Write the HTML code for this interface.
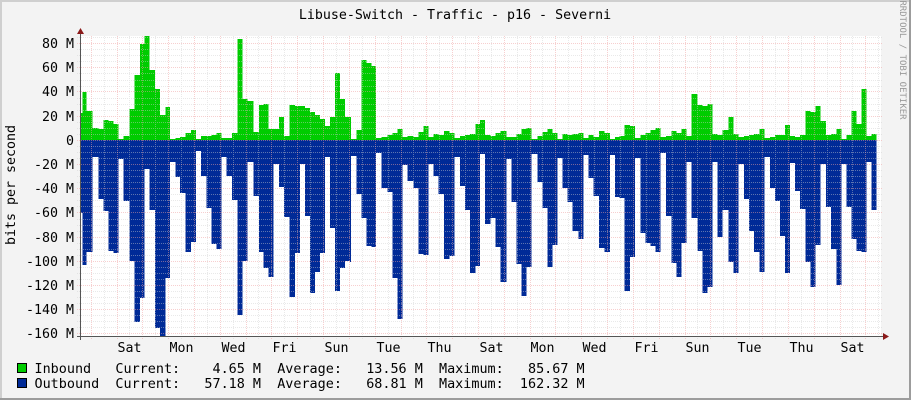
<!DOCTYPE html>
<html><head><meta charset="utf-8"><style>
html,body{margin:0;padding:0;background:#f3f3f3;}
svg{display:block;}
text{font-family:"DejaVu Sans Mono","Liberation Mono",monospace;fill:#000;}
</style></head><body>
<svg width="911" height="400" viewBox="0 0 911 400" xmlns="http://www.w3.org/2000/svg">
<rect x="0" y="0" width="911" height="400" fill="#f3f3f3"/>
<rect x="0" y="0" width="911" height="2" fill="#cfcfcf"/>
<rect x="0" y="0" width="2" height="400" fill="#cfcfcf"/>
<rect x="909" y="0" width="2" height="400" fill="#9c9c9c"/>
<rect x="0" y="398" width="911" height="2" fill="#9c9c9c"/>
<rect x="80" y="36" width="801" height="301" fill="#ffffff"/>

<g shape-rendering="crispEdges">
<path fill="#00cc00" d="M80 140V113H82.7V92H86.7V111H92.7V128H98.3V129H103.3V120H108.3V121H113.3V124H118.3V139H123.3V136H129.3V109H134.3V75H140V44H144.3V36H149.3V70H155V89H160V115H165.7V107H170V139H175.7V138H180V137H185.3V133H191V130H196V139H201V136H206.7V136H211.7V135H216.7V133H221.7V138H226.7V138H232V133H237.3V39H242.3V99H247.7V101H253.3V132H259V105H263.3V104H268.3V129H273.3V129H279V117H284V136H289.3V105H295V106H300V106H305V108H310V112H315V115H320V119H325V126H330V117H335V73H340V99H345V117H350V117H351V139H356.7V130H361.7V60H366.7V63H371.7V66H376V138H381.7V137H387.7V135H392.7V133H397.7V129H402.3V137H407.7V136H413.3V137H418.3V132H423.3V126H428.3V137H433.3V134H438.3V135H444V131H449.3V133H454.3V138H460V136H465V135H470V134H475.7V124H480V120H485V135H490.7V136H495.7V133H500.7V131H506.7V137H511.7V137H516.7V134H521.7V129H526.7V128H531.7V139H537.3V136H542.3V132H547.3V129H552.3V133H557.3V139H562.3V134H567.7V135H572.7V134H578.3V133H583.3V138H588.3V135H593.3V137H599V131H604.3V133H610V139H615V137H619.3V136H624.3V125H630V126H635V138H640.7V135H645.7V133H650.7V130H655.7V128H660.7V137H666V136H671.7V131H676.7V133H681.7V129H686.7V136H691.7V94H697.3V105H702.3V106H707.3V104H712.3V134H717.3V135H722.7V130H728.3V117H733.3V134H738.3V137H744V136H749V135H754V134H759.3V129H764.3V138H770V137H775V135H780V135H785V125H790V136H795V137H800V135H805.7V111H810.7V112H815.7V106H820.7V121H826V135H831V134H836.7V129H841.7V139H846.7V135H851.7V111H856.7V124H861.7V89H866.7V136H871.7V134H876.7V140Z"/>
<path fill="#002a97" d="M80 140V213H82.7V265H86.7V252H92.7V157H98.3V199H103.3V211H108.3V251H113.3V253H118.3V159H123.3V201H129.3V261H134.3V322H140V298H144.3V169H149.3V210H155V328H160V336H165.7V278H170V162H175.7V177H180V193H185.3V252H191V242H196V151H201V176H206.7V208H211.7V244H216.7V249H221.7V157H226.7V176H232V200H237.3V315H242.3V261H247.7V162H253.3V196H259V252H263.3V268H268.3V277H273.3V164H279V187H284V217H289.3V297H295V253H300V164H305V216H310V293H315V272H320V253H325V157H330V228H335V291H340V268H345V261H350V262H351V156H356.7V194H361.7V218H366.7V246H371.7V247H376V153H381.7V188H387.7V192H392.7V278H397.7V319H402.3V165H407.7V181H413.3V188H418.3V254H423.3V255H428.3V164H433.3V176H438.3V194H444V259H449.3V256H454.3V157H460V186H465V210H470V273H475.7V266H480V154H485V224H490.7V218H495.7V247H500.7V282H506.7V159H511.7V202H516.7V264H521.7V296H526.7V267H531.7V154H537.3V182H542.3V208H547.3V267H552.3V245H557.3V158H562.3V188H567.7V202H572.7V231H578.3V239H583.3V155H588.3V178H593.3V196H599V248H604.3V252H610V155H615V197H619.3V198H624.3V291H630V257H635V158H640.7V233H645.7V243H650.7V246H655.7V252H660.7V153H666V216H671.7V263H676.7V277H681.7V243H686.7V162H691.7V218H697.3V251H702.3V293H707.3V287H712.3V162H717.3V237H722.7V210H728.3V262H733.3V273H738.3V164H744V199H749V231H754V252H759.3V272H764.3V157H770V188H775V201H780V236H785V273H790V163H795V191H800V209H805.7V262H810.7V287H815.7V245H820.7V164H826V207H831V249H836.7V285H841.7V164H846.7V207H851.7V239H856.7V251H861.7V252H866.7V162H871.7V210H876.7V140Z"/>

<path stroke="#cfcfcf" stroke-width="1" stroke-dasharray="1,1" fill="none" opacity="0.45" d="M77 37.5H882M77 49.5H882M77 55.5H882M77 61.5H882M77 73.5H882M77 80.5H882M77 86.5H882M77 98.5H882M77 104.5H882M77 110.5H882M77 122.5H882M77 128.5H882M77 134.5H882M77 146.5H882M77 152.5H882M77 158.5H882M77 170.5H882M77 176.5H882M77 182.5H882M77 194.5H882M77 200.5H882M77 206.5H882M77 219.5H882M77 225.5H882M77 231.5H882M77 243.5H882M77 249.5H882M77 255.5H882M77 267.5H882M77 273.5H882M77 279.5H882M77 291.5H882M77 297.5H882M77 303.5H882M77 315.5H882M77 321.5H882M77 327.5H882
M104.5 36V340M129.5 36V340M155.5 36V340M181.5 36V340M207.5 36V340M233.5 36V340M258.5 36V340M284.5 36V340M310.5 36V340M336.5 36V340M362.5 36V340M388.5 36V340M413.5 36V340M439.5 36V340M465.5 36V340M491.5 36V340M517.5 36V340M542.5 36V340M568.5 36V340M594.5 36V340M620.5 36V340M646.5 36V340M672.5 36V340M697.5 36V340M723.5 36V340M749.5 36V340M775.5 36V340M801.5 36V340M827.5 36V340M852.5 36V340M878.5 36V340"/>
<path stroke="#f0a0a0" stroke-width="1" stroke-dasharray="1,1" fill="none" opacity="0.5" d="M77 43.5H882M77 67.5H882M77 91.5H882M77 116.5H882M77 140.5H882M77 164.5H882M77 188.5H882M77 212.5H882M77 237.5H882M77 261.5H882M77 285.5H882M77 309.5H882M77 333.5H882
M91.5 36V340M117.5 36V340M142.5 36V340M168.5 36V340M194.5 36V340M220.5 36V340M246.5 36V340M271.5 36V340M297.5 36V340M323.5 36V340M349.5 36V340M375.5 36V340M401.5 36V340M426.5 36V340M452.5 36V340M478.5 36V340M504.5 36V340M530.5 36V340M555.5 36V340M581.5 36V340M607.5 36V340M633.5 36V340M659.5 36V340M685.5 36V340M710.5 36V340M736.5 36V340M762.5 36V340M788.5 36V340M814.5 36V340M840.5 36V340M865.5 36V340"/>

<path stroke="#555" stroke-width="1" fill="none" d="M80.5 33V340M77 336.5H884"/>
</g>
<polygon points="80.5,28 77,34 84,34" fill="#8b1a1a"/>
<polygon points="889,336.5 883,333 883,340" fill="#8b1a1a"/>

<text x="455" y="19" font-size="13.3" text-anchor="middle">Libuse-Switch - Traffic - p16 - Severni</text>

<g font-size="13.3" text-anchor="end">
<text x="74" y="48">80 M</text>
<text x="74" y="72">60 M</text>
<text x="74" y="96">40 M</text>
<text x="74" y="121">20 M</text>
<text x="74" y="145">0</text>
<text x="74" y="169">-20 M</text>
<text x="74" y="193">-40 M</text>
<text x="74" y="217">-60 M</text>
<text x="74" y="242">-80 M</text>
<text x="74" y="266">-100 M</text>
<text x="74" y="290">-120 M</text>
<text x="74" y="314">-140 M</text>
<text x="74" y="338">-160 M</text>
</g>

<text transform="translate(15,185) rotate(-90)" font-size="13.3" text-anchor="middle">bits per second</text>
<text transform="translate(900,60) rotate(90)" font-size="9" text-anchor="middle" style="fill:#999">RRDTOOL / TOBI OETIKER</text>

<g font-size="13.3" text-anchor="middle">
<text x="129.5" y="352">Sat</text>
<text x="181.5" y="352">Mon</text>
<text x="233.5" y="352">Wed</text>
<text x="284.5" y="352">Fri</text>
<text x="336.5" y="352">Sun</text>
<text x="388.5" y="352">Tue</text>
<text x="439.5" y="352">Thu</text>
<text x="491.5" y="352">Sat</text>
<text x="542.5" y="352">Mon</text>
<text x="594.5" y="352">Wed</text>
<text x="646.5" y="352">Fri</text>
<text x="697.5" y="352">Sun</text>
<text x="749.5" y="352">Tue</text>
<text x="801.5" y="352">Thu</text>
<text x="852.5" y="352">Sat</text>
</g>

<rect x="17.5" y="363.5" width="9" height="9" fill="#00cc00" stroke="#000" stroke-width="1"/>
<rect x="17.5" y="378.5" width="9" height="9" fill="#002a97" stroke="#000" stroke-width="1"/>
<text x="34.5" y="373" font-size="13.45" xml:space="preserve" style="white-space:pre">Inbound   Current:    4.65 M  Average:   13.56 M  Maximum:   85.67 M</text>
<text x="34.5" y="388" font-size="13.45" xml:space="preserve" style="white-space:pre">Outbound  Current:   57.18 M  Average:   68.81 M  Maximum:  162.32 M</text>
</svg>
</body></html>
